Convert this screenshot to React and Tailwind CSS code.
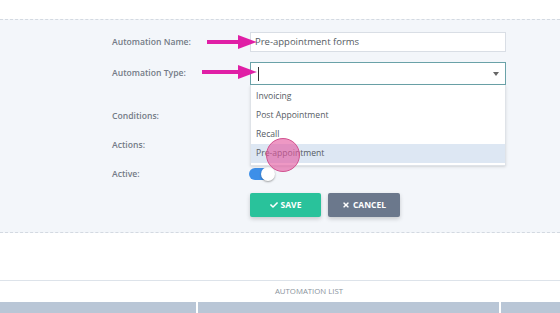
import { FaCheck, FaTimes } from 'react-icons/fa';

const options = ['Invoicing', 'Post Appointment', 'Recall', 'Pre-appointment'];

function Label({ children }) {
    return <div className="w-[250px] pl-[112px] shrink-0 whitespace-nowrap text-[8.6px] font-semibold text-[#737b86]">{children}</div>;
}

function Row({ label, className = '', children }) {
    return (
        <div className={`flex items-center ${className}`}>
            <Label>{label}</Label>
            <div className="flex-1 flex items-center">{children}</div>
        </div>
    );
}

export default function App() {
    return (
        <div className="relative w-[560px] h-[313px] overflow-hidden bg-white font-['Open_Sans',sans-serif]">
            <div className="h-[19px]" />

            {/* form panel */}
            <div className="h-[214px] border-y border-dashed border-[#d3d9e1] bg-[#f3f6fa] pt-[12px]">
                <Row label="Automation Name:" className="h-[20px]">
                    <div className="w-[256px] h-[20px] border border-[#d9dee5] bg-white pl-[4px] flex items-center text-[9.5px] text-[#555b63]">
                        Pre-appointment forms
                    </div>
                </Row>

                <Row label="Automation Type:" className="h-[23px] mt-[10px]">
                    <div className="relative w-[256px]">
                        <div className="h-[23px] border border-[#6aa2a8] bg-white flex items-center justify-between pl-[7px] pr-[6px]">
                            <span className="w-px h-[14px] bg-[#333]" />
                            <span className="w-0 h-0 border-x-[3px] border-x-transparent border-t-[4px] border-t-[#666]" />
                        </div>
                        <div className="absolute left-0 top-[23px] w-[256px] bg-white border border-t-0 border-[#dfe3e8] py-[2px] shadow-sm z-10">
                            {options.map((o, i) => (
                                <div
                                    key={o}
                                    className={`h-[19px] flex items-center pl-[5px] text-[8.6px] text-[#555b63] ${i === 3 ? 'bg-[#dde7f3]' : ''}`}
                                >
                                    {o}
                                </div>
                            ))}
                        </div>
                    </div>
                </Row>

                <Row label="Conditions:" className="h-[20px] mt-[21px]" />
                <Row label="Actions:" className="h-[20px] mt-[9px]" />
                <Row label="Active:" className="h-[20px] mt-[9px]">
                    <div className="relative w-[25px] h-[12px] rounded-full bg-[#3d8fe8] -ml-[1px]">
                        <div className="absolute right-[-1px] top-[-1px] w-[14px] h-[14px] rounded-full bg-white shadow-[0_1px_2px_rgba(0,0,0,0.35)]" />
                    </div>
                </Row>

                <div className="flex gap-[7px] mt-[9px] pl-[250px]">
                    <button className="w-[71px] h-[24px] rounded-[2px] bg-[#29c29b] text-white text-[8.5px] font-bold flex items-center justify-center gap-[3px] shadow-[0_2px_4px_rgba(0,0,0,0.18)]">
                        <FaCheck className="w-[8px] h-[8px]" /> SAVE
                    </button>
                    <button className="w-[72px] h-[24px] rounded-[2px] bg-[#6b788c] text-white text-[8.5px] font-bold flex items-center justify-center gap-[3px] shadow-[0_2px_4px_rgba(0,0,0,0.18)]">
                        <FaTimes className="w-[8px] h-[8px]" /> CANCEL
                    </button>
                </div>
            </div>

            {/* automation list */}
            <div className="h-[47px]" />
            <div className="border-t border-[#dde3ea]">
                <div className="h-[21px] flex items-center justify-center pl-[58px] text-[7.8px] text-[#8b939d]">
                    AUTOMATION LIST
                </div>
                <div className="h-[12px] grid grid-cols-[196px_2px_301px_2px_1fr]">
                    <div className="bg-[#b9c6d6]" />
                    <div className="bg-white" />
                    <div className="bg-[#b9c6d6]" />
                    <div className="bg-white" />
                    <div className="bg-[#b9c6d6]" />
                </div>
            </div>

            {/* annotation arrows */}
            <svg className="absolute inset-0 pointer-events-none z-20" width="560" height="313">
                <g fill="#e01fa6">
                    <rect x="207" y="40" width="34" height="4" />
                    <polygon points="238,35 257,42 238,49" />
                    <rect x="202" y="70" width="39" height="4" />
                    <polygon points="238,65 257,72 238,79" />
                </g>
                <circle cx="283" cy="155" r="16.5" fill="rgba(228,88,160,0.62)" stroke="#d2528f" strokeWidth="1" />
            </svg>
        </div>
    );
}
